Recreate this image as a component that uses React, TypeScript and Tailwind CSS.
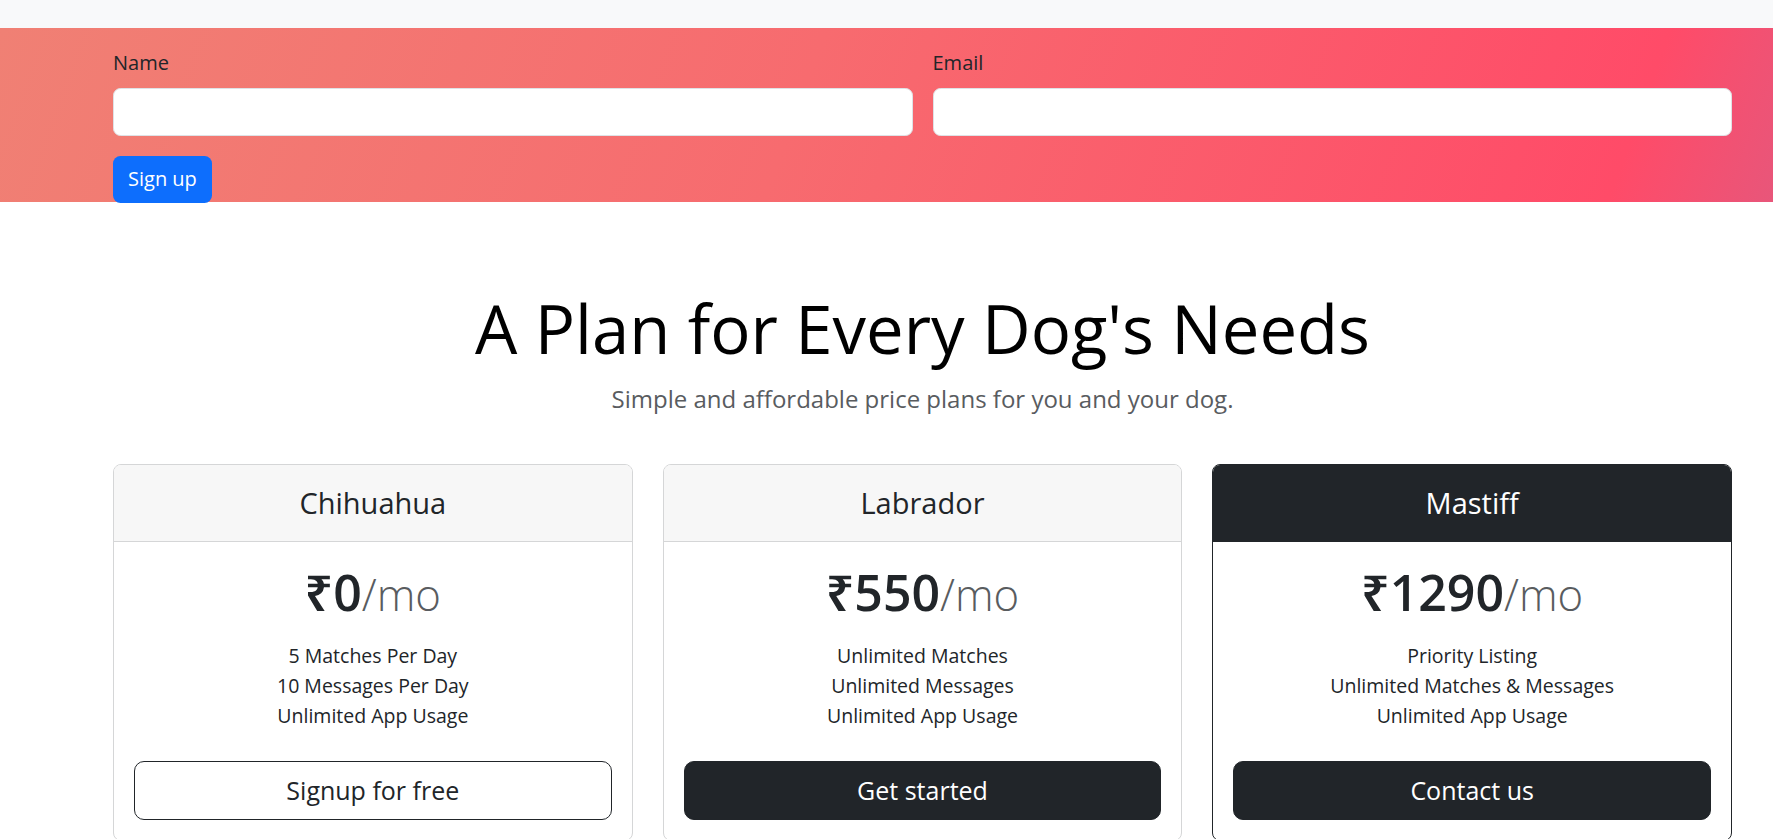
import React from "react";

const plans = [
  {
    name: "Chihuahua",
    price: "₹0",
    features: ["5 Matches Per Day", "10 Messages Per Day", "Unlimited App Usage"],
    cta: "Signup for free",
    dark: false,
    outline: true,
  },
  {
    name: "Labrador",
    price: "₹550",
    features: ["Unlimited Matches", "Unlimited Messages", "Unlimited App Usage"],
    cta: "Get started",
    dark: false,
    outline: false,
  },
  {
    name: "Mastiff",
    price: "₹1290",
    features: ["Priority Listing", "Unlimited Matches & Messages", "Unlimited App Usage"],
    cta: "Contact us",
    dark: true,
    outline: false,
  },
];

function PlanCard(props: any) {
  const { plan } = props;
  return (
    <div
      className={
        "flex flex-col rounded-[8px] border bg-white overflow-hidden " +
        (plan.dark ? "border-[#212529]" : "border-[#d5d6d7]")
      }
    >
      <div
        className={
          "py-[20px] text-center border-b " +
          (plan.dark ? "bg-[#212529] border-[#212529] text-white" : "bg-[#f7f7f7] border-[#d5d6d7] text-[#212529]")
        }
      >
        <h4 className="text-[29px] leading-[36px] font-normal">{plan.name}</h4>
      </div>
      <div className="p-[20px] text-center">
        <h1 className="text-[50px] leading-[60px] font-semibold text-[#212529]">
          {plan.price}
          <small className="text-[43.75px] font-light text-[#595c5f]">/mo</small>
        </h1>
        <ul className="mt-[17px] mb-[30px] text-[19.5px] leading-[30px] text-[#212529]">
          {plan.features.map((f: string) => (
            <li key={f}>{f}</li>
          ))}
        </ul>
        <button
          className={
            "w-full rounded-[10px] border py-[10px] px-[20px] text-[25px] leading-[37.5px] " +
            (plan.outline ? "border-[#212529] bg-white text-[#212529]" : "border-[#212529] bg-[#212529] text-white")
          }
        >
          {plan.cta}
        </button>
      </div>
    </div>
  );
}

export default function App() {
  return (
    <div className="min-h-screen bg-white font-['Open_Sans','Noto_Sans',sans-serif] text-[#212529]">
      <div className="h-[28px] bg-[#f8f9fa]" />

      {/* signup strip */}
      <div className="h-[174px] pt-[20px] pl-[113px] pr-[41px] bg-[linear-gradient(110deg,#f08074_0%,#f76b6f_45%,#ff4b68_91%,#e8567a_100%)]">
        <div className="grid grid-cols-2 gap-x-[20px]">
          <div>
            <label className="block mb-[10px] text-[20px] leading-[30px]">Name</label>
            <input className="w-full h-[47.5px] rounded-[7.5px] border border-[#dee2e6] bg-white px-[15px]" />
          </div>
          <div>
            <label className="block mb-[10px] text-[20px] leading-[30px]">Email</label>
            <input className="w-full h-[47.5px] rounded-[7.5px] border border-[#dee2e6] bg-white px-[15px]" />
          </div>
        </div>
        <button className="mt-[20px] h-[47.5px] px-[15px] rounded-[7.5px] bg-[#0d6efd] text-white text-[20px]">
          Sign up
        </button>
      </div>

      <div className="pl-[113px] pr-[41px]">
        <div className="pt-[85px] pb-[46px] text-center">
          <h1 className="text-[67px] leading-[83px] font-normal text-black mb-[10px]">A Plan for Every Dog's Needs</h1>
          <p className="text-[24px] leading-[37.5px] font-normal text-[#595c5f]">
            Simple and affordable price plans for you and your dog.
          </p>
        </div>

        <div className="grid grid-cols-3 gap-x-[30px]">
          {plans.map((p) => (
            <PlanCard key={p.name} plan={p} />
          ))}
        </div>
      </div>
    </div>
  );
}
